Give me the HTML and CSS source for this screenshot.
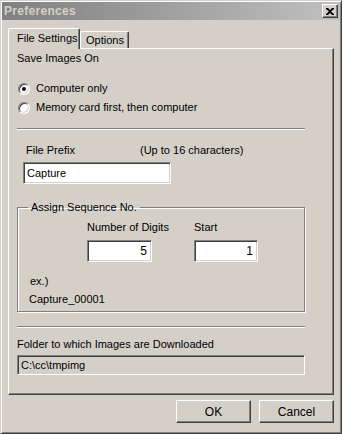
FILE: index.html
```html
<!DOCTYPE html>
<html lang="en">
<head>
  <meta charset="UTF-8" />
  <title>Preferences</title>
  <link rel="stylesheet" href="styles.css">
</head>
<body>
  <div class="window">
    <div class="titlebar">
      <span class="title">Preferences</span>
      <button class="close-btn" title="Close">
        <svg width="8" height="7" viewBox="0 0 8 7">
          <path d="M0 0h2l2 2 2-2h2v1L5 3.5 8 6v1H6L4 5 2 7H0V6l3-2.5L0 1z" fill="#000"/>
        </svg>
      </button>
    </div>

    <div class="content">
      <div class="tabs">
        <div class="tab active">File Settings</div>
        <div class="tab">Options</div>
      </div>

      <div class="panel">
        <div class="caption">Save Images On</div>
        <div class="radio-list">
          <label class="radio-row">
            <span class="radio checked"></span>
            Computer only
          </label>
          <label class="radio-row">
            <span class="radio"></span>
            Memory card first, then computer
          </label>
        </div>

        <div class="sep"></div>

        <div class="prefix-labels">
          <span class="prefix-name">File Prefix</span>
          <span>(Up to 16 characters)</span>
        </div>
        <div class="field prefix-field">Capture</div>

        <fieldset class="group">
          <legend>Assign Sequence No.</legend>
          <div class="seq-row">
            <div class="seq-col digits">
              <span>Number of Digits</span>
              <div class="field num">5</div>
            </div>
            <div class="seq-col start">
              <span>Start</span>
              <div class="field num">1</div>
            </div>
          </div>
          <div class="example">ex.)</div>
          <div class="example-value">Capture_00001</div>
        </fieldset>

        <div class="sep folder-sep"></div>

        <div class="folder-label">Folder to which Images are Downloaded</div>
        <div class="field readonly">C:\cc\tmpimg</div>
      </div>

      <div class="buttons">
        <button class="btn">OK</button>
        <button class="btn">Cancel</button>
      </div>
    </div>
  </div>
</body>
</html>
```

FILE: styles.css
```css
* { box-sizing: border-box; }

body {
  margin: 0;
  font-family: 'Liberation Sans', Arial, sans-serif;
  font-size: 11px;
  line-height: 13px;
  color: #000;
  background: #d4d0c8;
}

.window {
  width: 342px;
  height: 434px;
  background: #d4d0c8;
  border: 1px solid;
  border-color: #d4d0c8 #404040 #404040 #d4d0c8;
  box-shadow: inset 1px 1px 0 #fff, inset -1px -1px 0 #808080;
  padding: 1px;
}

.titlebar {
  height: 18px;
  background: linear-gradient(90deg, #808080, #c0c0c0);
  display: flex;
  align-items: center;
  justify-content: space-between;
  padding: 0 2px 0 2px;
}

.title {
  color: #d4d0c8;
  font-weight: bold;
  font-size: 12px;
  letter-spacing: 0.3px;
}

.close-btn {
  width: 16px;
  height: 14px;
  padding: 0;
  margin: 0;
  background: #d4d0c8;
  border: 1px solid;
  border-color: #fff #404040 #404040 #fff;
  box-shadow: inset -1px -1px 0 #808080;
  display: flex;
  align-items: center;
  justify-content: center;
}

.content {
  padding: 8px 6px 0 6px;
}

.tabs {
  display: flex;
  align-items: flex-end;
  height: 20px;
}

.tab {
  height: 17px;
  padding: 0 4px 0 5px;
  border: 1px solid;
  border-bottom: none;
  border-color: #fff #404040 #404040 #fff;
  border-radius: 2px 2px 0 0;
  box-shadow: inset -1px 0 0 #808080;
  display: flex;
  align-items: center;
  white-space: nowrap;
}

.tab.active {
  height: 21px;
  width: 72px;
  margin-bottom: -1px;
  padding: 0 0 2px 8px;
  background: #d4d0c8;
  position: relative;
  z-index: 1;
}

.panel {
  height: 347px;
  border: 1px solid;
  border-color: #fff #404040 #404040 #fff;
  box-shadow: inset -1px -1px 0 #808080;
  padding: 3px 28px 0 8px;
}

.radio-list { margin-top: 14px; }

.radio-row {
  height: 19px;
  display: flex;
  align-items: center;
  gap: 6px;
  padding-left: 1px;
}

.radio {
  width: 12px;
  height: 12px;
  border-radius: 50%;
  background: #fff;
  border: 1px solid;
  border-color: #808080 #fff #fff #808080;
  box-shadow: inset 1px 1px 0 #404040, inset -1px -1px 0 #d4d0c8;
  display: flex;
  align-items: center;
  justify-content: center;
}

.radio.checked::after {
  content: '';
  width: 4px;
  height: 4px;
  border-radius: 50%;
  background: #000;
}

.sep {
  height: 2px;
  margin-top: 11px;
  border-top: 1px solid #808080;
  border-bottom: 1px solid #fff;
}

.prefix-labels {
  margin-top: 14px;
  padding-left: 9px;
  display: flex;
}

.prefix-name { width: 114px; }

.field {
  height: 22px;
  background: #fff;
  border: 1px solid;
  border-color: #808080 #fff #fff #808080;
  box-shadow: inset 1px 1px 0 #404040, inset -1px -1px 0 #d4d0c8;
  padding: 0 4px 0 3px;
  display: flex;
  align-items: center;
}

.prefix-field {
  margin: 5px 0 0 6px;
  width: 148px;
}

.group {
  margin: 17px 0 0 0;
  padding: 0 0 5px 0;
  border: 1px solid #808080;
  box-shadow: inset 1px 1px 0 #fff, 1px 1px 0 #fff;
  min-width: 0;
}

.group legend {
  margin-left: 10px;
  padding: 0 3px;
}

.seq-row {
  display: flex;
  margin: 7px 0 0 69px;
}

.seq-col {
  display: flex;
  flex-direction: column;
  gap: 6px;
}

.seq-col.digits { width: 107px; }

.seq-col .num {
  justify-content: flex-end;
  width: 65px;
  font-size: 12px;
}

.seq-col.start .num { width: 64px; }

.example {
  margin: 13px 0 0 12px;
}

.example-value {
  margin: 5px 0 0 11px;
}

.folder-sep { margin-top: 14px; }

.folder-label { margin-top: 10px; }

.readonly {
  margin-top: 4px;
  height: 20px;
  background: #d4d0c8;
  box-shadow: inset 1px 1px 0 #404040;
}

.buttons {
  display: flex;
  justify-content: flex-end;
  gap: 8px;
  margin-top: 5px;
}

.btn {
  width: 75px;
  height: 23px;
  background: #d4d0c8;
  border: 1px solid;
  border-color: #fff #404040 #404040 #fff;
  box-shadow: inset -1px -1px 0 #808080;
  font-family: inherit;
  font-size: 12px;
  color: #000;
  padding: 0;
}
```
